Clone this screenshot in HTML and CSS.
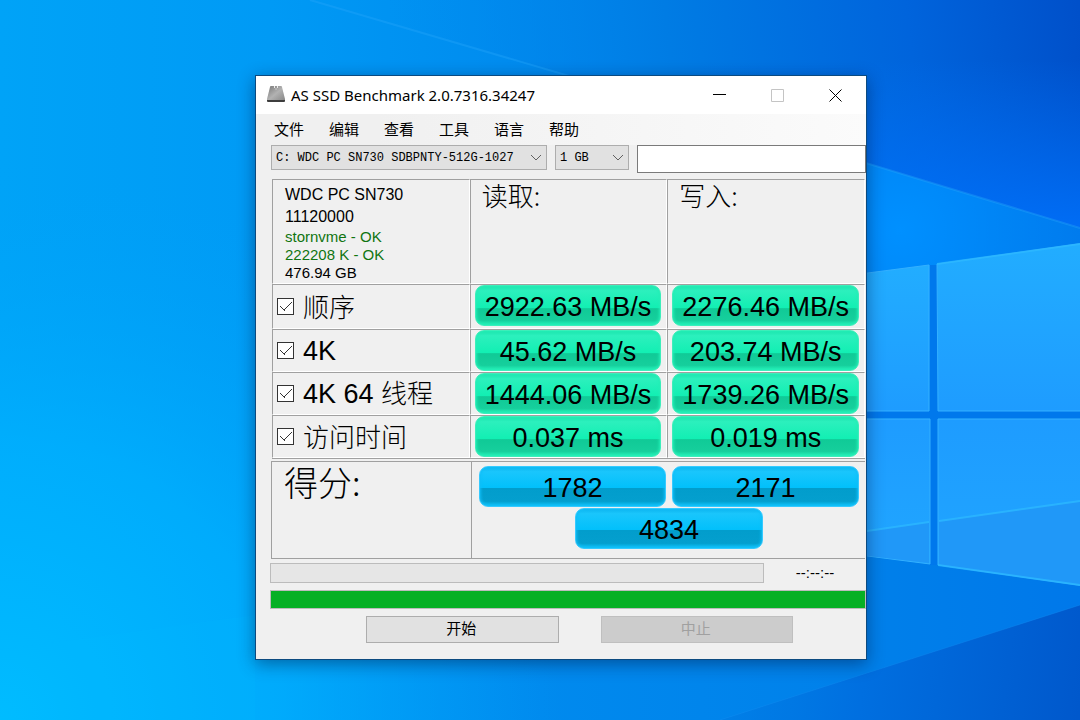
FILE: index.html
```html
<!DOCTYPE html>
<html lang="zh-CN">
<head>
<meta charset="utf-8">
<meta name="viewport" content="width=device-width, initial-scale=1">
<title>AS SSD Benchmark 2.0.7316.34247</title>
<link rel="stylesheet" href="styles.css">
</head>
<body class="desktop">
<svg class="wallpaper" viewBox="0 0 1080 720" preserveAspectRatio="xMidYMid slice" aria-hidden="true">
  <defs>
    <linearGradient id="sky" x1="0" y1="0" x2="1" y2="0">
      <stop offset="0" stop-color="#00a3f7"/><stop offset=".25" stop-color="#009af5"/><stop offset=".5" stop-color="#008aee"/><stop offset=".8" stop-color="#0080ea"/><stop offset="1" stop-color="#0078ea"/>
    </linearGradient>
    <radialGradient id="glow" gradientUnits="userSpaceOnUse" cx="0" cy="720" r="560">
      <stop offset="0" stop-color="#00bcff"/><stop offset=".5" stop-color="#00b2ff" stop-opacity=".7"/><stop offset="1" stop-color="#00a0f8" stop-opacity="0"/>
    </radialGradient>
    <linearGradient id="upper" gradientUnits="userSpaceOnUse" x1="400" y1="100" x2="1080" y2="20">
      <stop offset="0" stop-color="#008cf0" stop-opacity="0"/><stop offset=".4" stop-color="#007ce4"/><stop offset=".75" stop-color="#0064dc"/><stop offset="1" stop-color="#0050ca"/>
    </linearGradient>
    <linearGradient id="upperfade" gradientUnits="userSpaceOnUse" x1="1000" y1="60" x2="1000" y2="230">
      <stop offset="0" stop-color="#0070f8" stop-opacity="0"/><stop offset="1" stop-color="#0070fa" stop-opacity=".9"/>
    </linearGradient>
    <radialGradient id="halo" gradientUnits="userSpaceOnUse" cx="900" cy="230" r="220">
      <stop offset="0" stop-color="#0090ff"/><stop offset="1" stop-color="#0088ff" stop-opacity="0"/>
    </radialGradient>
    <linearGradient id="lower" gradientUnits="userSpaceOnUse" x1="600" y1="640" x2="1080" y2="700">
      <stop offset="0" stop-color="#0084e6" stop-opacity="0"/><stop offset=".55" stop-color="#006fe0"/><stop offset="1" stop-color="#0058cc"/>
    </linearGradient>
    <linearGradient id="pane" x1="0" y1="0" x2="0" y2="1">
      <stop offset="0" stop-color="#22adff"/><stop offset="1" stop-color="#1e9cff"/>
    </linearGradient>
    <linearGradient id="pane-low" x1="0" y1="0" x2="0" y2="1">
      <stop offset="0" stop-color="#1e9cff"/><stop offset="1" stop-color="#20a6ff"/>
    </linearGradient>
  </defs>
  <rect width="1080" height="720" fill="url(#sky)"/>
  <rect width="1080" height="720" fill="url(#glow)"/>
  <path d="M0 650 255 615 255 720H0Z" fill="#00bcff" opacity=".12"/>
  <path d="M310 0H1080V228L866 163Z" fill="url(#upper)"/>
  <path d="M700 113V0H1080V228Z" fill="url(#upperfade)"/>
  <path d="M866 163 1080 228V460H700V113Z" fill="url(#halo)"/>
  <path d="M310 0 866 163 1080 228" fill="none" stroke="#22a4fa" stroke-width="2" opacity=".4"/>
  <path d="M1080 605 720 720H1080Z" fill="url(#lower)"/>
  <path d="M1080 605 720 720" stroke="#1690f4" opacity=".35"/>
  <path d="M860 411H1080V418H860ZM930 265H938V565H930Z" fill="#0078ec"/>
  <g stroke="#34b0ff" stroke-width="1">
    <path d="M860 274 929 265V411H860Z" fill="url(#pane)"/>
    <path d="M937 264 1085 243V411H938Z" fill="url(#pane)"/>
    <path d="M860 419H930V564L860 555Z" fill="url(#pane-low)"/>
    <path d="M938 419H1085V586L938 565Z" fill="url(#pane-low)"/>
  </g>
  <path d="M860 532 929 522V563L860 555ZM939 521 1080 501V585L939 565Z" fill="#2098f8"/>
  <path d="M860 532 929 522M939 521 1080 501M937 264 1080 244M938 565 1080 585" fill="none" stroke="#2cb8ff" stroke-width="2" opacity=".8"/>
</svg>

<main class="window">
  <header class="titlebar">
    <svg class="app-icon" viewBox="0 0 20 20" aria-hidden="true">
      <defs><linearGradient id="metal" x1="0" y1="0" x2="1" y2="1"><stop offset="0" stop-color="#777"/><stop offset=".5" stop-color="#b2b2b2"/><stop offset="1" stop-color="#858585"/></linearGradient></defs>
      <path d="M4 2Q4 1 5 1H15Q16 1 16 2L19 14V16H1V14Z" fill="url(#metal)"/>
      <path d="M1 15H19V16Q19 17 18 17H2Q1 17 1 16Z" fill="#3d3d3d"/>
      <path d="M8.500 1V3M11.500 1V3M9.500 4H10.500" stroke="#eee"/>
    </svg>
    <h1 class="title">AS SSD Benchmark 2.0.7316.34247</h1>
    <div class="controls">
      <button class="control" aria-label="最小化"><svg class="glyph" viewBox="0 0 13 13"><path d="M0 5.5H13"/></svg></button>
      <button class="control control-off" aria-label="最大化" disabled><svg class="glyph" viewBox="0 0 13 13"><path d="M.5 .5H12.5V12.5H.5Z"/></svg></button>
      <button class="control" aria-label="关闭"><svg class="glyph" viewBox="0 0 13 13"><path d="M.5 .5 12.5 12.5M12.5 .5 .5 12.5"/></svg></button>
    </div>
  </header>
  <nav class="menu">
    <button class="menu-item">文件</button><button class="menu-item">编辑</button><button class="menu-item">查看</button><button class="menu-item">工具</button><button class="menu-item">语言</button><button class="menu-item">帮助</button>
  </nav>
  <div class="toolbar">
    <div class="picker picker-drive">
      <select class="select" aria-label="磁盘"><option>C: WDC PC SN730 SDBPNTY-512G-1027</option></select>
      <svg class="chevron" viewBox="0 0 12 8" aria-hidden="true"><path d="M1 1 6 6 11 1"/></svg>
    </div>
    <div class="picker picker-size">
      <select class="select" aria-label="测试大小"><option>1 GB</option></select>
      <svg class="chevron" viewBox="0 0 12 8" aria-hidden="true"><path d="M1 1 6 6 11 1"/></svg>
    </div>
    <input class="note" type="text" aria-label="备注">
  </div>

  <table class="results">
    <thead>
      <tr class="row-head">
        <td class="cell drive">
          <p class="drive-id">WDC PC SN730</p>
          <p class="drive-id">11120000</p>
          <p class="drive-info ok">stornvme - OK</p>
          <p class="drive-info ok">222208 K - OK</p>
          <p class="drive-info">476.94 GB</p>
        </td>
        <th class="cell heading" scope="col">读取:</th>
        <th class="cell heading" scope="col">写入:</th>
      </tr>
    </thead>
    <tbody>
      <tr class="row-first">
        <th class="cell" scope="row"><label class="test"><input class="check" type="checkbox" checked><span class="han">顺序</span></label></th>
        <td class="cell value"><div class="pill">2922.63 MB/s</div></td>
        <td class="cell value"><div class="pill">2276.46 MB/s</div></td>
      </tr>
      <tr class="row">
        <th class="cell" scope="row"><label class="test"><input class="check" type="checkbox" checked><span>4K</span></label></th>
        <td class="cell value"><div class="pill">45.62 MB/s</div></td>
        <td class="cell value"><div class="pill">203.74 MB/s</div></td>
      </tr>
      <tr class="row">
        <th class="cell" scope="row"><label class="test"><input class="check" type="checkbox" checked><span>4K 64 <span class="han">线程</span></span></label></th>
        <td class="cell value"><div class="pill">1444.06 MB/s</div></td>
        <td class="cell value"><div class="pill">1739.26 MB/s</div></td>
      </tr>
      <tr class="row">
        <th class="cell" scope="row"><label class="test"><input class="check" type="checkbox" checked><span class="han">访问时间</span></label></th>
        <td class="cell value"><div class="pill">0.037 ms</div></td>
        <td class="cell value"><div class="pill">0.019 ms</div></td>
      </tr>
    </tbody>
  </table>

  <section class="score">
    <h2 class="score-title">得分:</h2>
    <div class="score-values">
      <div class="pill pill-blue">1782</div>
      <div class="pill pill-blue">2171</div>
      <div class="pill pill-blue pill-total">4834</div>
    </div>
  </section>

  <div class="status">
    <progress class="bar" value="0" max="100" aria-label="当前测试"></progress>
    <span class="time">--:--:--</span>
  </div>
  <progress class="bar bar-total" value="100" max="100" aria-label="总进度"></progress>
  <footer class="actions">
    <button class="action">开始</button>
    <button class="action" disabled>中止</button>
  </footer>
</main>
</body>
</html>
```
FILE: styles.css
```css
* { box-sizing: border-box; }

.desktop {
  margin: 0;
  min-height: 100vh;
  position: relative;
  overflow: hidden;
  background: #0090f0;
  color: #000;
  font-family: "Liberation Sans", "Noto Sans CJK SC", sans-serif;
}

.wallpaper {
  position: absolute;
  inset: 0;
  width: 100%;
  height: 100%;
}

.window {
  position: absolute;
  left: 255px;
  top: 75px;
  width: 612px;
  border: 1px solid #0b4a80;
  background: #f0f0f0;
  box-shadow: 0 4px 16px rgba(0, 20, 60, .45);
}

button, input, select { font: inherit; color: inherit; }

/* Title bar */
.titlebar {
  display: flex;
  align-items: center;
  height: 38px;
  padding: 0 2px 0 10px;
  background: #fff;
}
.app-icon { width: 20px; height: 20px; }
.title {
  flex: 1;
  margin: 0 0 0 5px;
  font: 400 15px/24px "Noto Sans", "Noto Sans CJK SC", sans-serif;
}
.controls { display: flex; height: 100%; }
.control {
  display: grid;
  place-items: center;
  width: 58px;
  padding: 0;
  border: 0;
  background: none;
}
.glyph { width: 13px; height: 13px; fill: none; stroke: #000; }
.control-off .glyph { stroke: #c4c4c4; }

/* Menu */
.menu {
  display: flex;
  gap: 25px;
  height: 31px;
  padding: 0 18px;
  background: linear-gradient(90deg, #f0f0f0 20%, #fbfbfb);
}
.menu-item {
  padding: 0 0 2px;
  border: 0;
  background: none;
  font: 400 15px/28px "Noto Sans CJK SC", sans-serif;
}

/* Drive and size pickers */
.toolbar { display: flex; align-items: flex-start; gap: 8px; padding-left: 15px; }
.picker { position: relative; height: 26px; }
.picker-drive { width: 276px; }
.picker-size { width: 74px; }
.select {
  appearance: none;
  width: 100%;
  height: 25px;
  padding: 0 4px;
  border: 1px solid #adadad;
  border-radius: 0;
  background: #e1e1e1;
  font: 400 12px/20px "Liberation Mono", monospace;
}
.chevron {
  position: absolute;
  right: 5px;
  top: 9px;
  width: 12px;
  height: 8px;
  fill: none;
  stroke: #606060;
  pointer-events: none;
}
.note {
  flex: 1;
  min-width: 0;
  height: 28px;
  padding: 0 4px;
  border: 1px solid #7a7a7a;
  background: #fff;
}

/* Results */
.results {
  width: 593px;
  margin: 6px 0 0 16px;
  border-collapse: separate;
  border-spacing: 0;
  table-layout: fixed;
  border-bottom: 1px solid #a0a0a0;
}
.cell {
  padding: 0;
  border: 1px solid #fff;
  border-top-color: #a0a0a0;
  border-left-color: #a0a0a0;
  font-weight: 400;
  text-align: left;
}
.row-head { height: 105px; }
.row-first { height: 45px; }
.row { height: 43px; }
.drive { padding-left: 12px; vertical-align: top; }
.drive-id, .drive-info { margin: 0; }
.drive-id { font-size: 16px; line-height: 22px; }
.drive-id:first-child { padding-top: 4px; }
.drive-info { font-size: 15px; line-height: 18px; }
.ok { color: #107510; }
.heading {
  padding: 0 11px;
  vertical-align: top;
  font: 300 26px/30px "Noto Sans CJK SC", sans-serif;
}
.test {
  display: flex;
  align-items: center;
  gap: 9px;
  padding-left: 4px;
  font-size: 27px;
  line-height: 40px;
}
.han { font: 300 26px/38px "Noto Sans CJK SC", sans-serif; }
.test > .han { padding-bottom: 2px; }
.check {
  appearance: none;
  width: 17px;
  height: 17px;
  margin: 0;
  border: 1px solid #333;
  background: #fff;
}
.check:checked {
  background:
    linear-gradient(45deg, transparent 42%, #333 42% 58%, transparent 58%) 2px 7px / 5px 5px no-repeat,
    linear-gradient(135deg, transparent 44%, #333 44% 56%, transparent 56%) 6px 3px / 8px 8px no-repeat,
    #fff;
}
.value { padding: 0 5px 0 4px; vertical-align: top; }

.pill {
  height: 41px;
  border: 1px solid #3deeba;
  border-radius: 9px;
  background: linear-gradient(#1de3ad, #2cf0bd 12%, #12efb3 56%, #10ca97 58%, #16cf9c 88%, #24f0b8);
  box-shadow: inset 0 0 3px 1px #22efb6;
  font-size: 27px;
  line-height: 42px;
  text-align: center;
}
.pill-blue {
  border-color: #35caff;
  background: linear-gradient(#10b4ee, #1ac6fc 12%, #02c0fb 53%, #029dcc 55%, #049fce 88%, #10c4fa);
  box-shadow: inset 0 0 3px 1px #10bff8;
}

/* Score */
.score {
  display: grid;
  grid-template-columns: 200px 1fr;
  margin: 2px 1px 0 15px;
  min-height: 98px;
  border: solid #a0a0a0;
  border-width: 1px 0 1px 1px;
}
.score-title {
  margin: 0;
  padding-left: 12px;
  border-right: 1px solid #a0a0a0;
  font: 300 34px/40px "Noto Sans CJK SC", sans-serif;
}
.score-values {
  display: grid;
  grid-template-columns: 1fr 1fr;
  align-content: start;
  gap: 1px 6px;
  padding: 4px 6px 0 7px;
}
.pill-total { grid-column: 1 / -1; justify-self: center; width: 188px; }

/* Progress */
.status { display: flex; align-items: center; margin: 4px 0 0 14px; }
.bar {
  appearance: none;
  display: block;
  width: 494px;
  height: 20px;
  border: 1px solid #bcbcbc;
  background: #e6e6e6;
}
.bar::-webkit-progress-bar { background: #e6e6e6; }
.bar::-webkit-progress-value { background: #06b025; }
.bar-total { width: auto; min-width: calc(100% - 14px); height: 19px; margin: 7px 0 0 14px; }
.time { flex: 1; text-align: center; font-size: 15px; line-height: 18px; }

/* Buttons */
.actions { display: flex; gap: 42px; padding: 7px 73px 16px 110px; }
.action {
  flex: 1;
  height: 27px;
  padding: 0 2px 4px 0;
  border: 1px solid #adadad;
  background: #e1e1e1;
  font: 400 15px/20px "Noto Sans CJK SC", sans-serif;
}
.action:disabled { border-color: #bfbfbf; background: #ccc; color: #a0a0a0; }
```
